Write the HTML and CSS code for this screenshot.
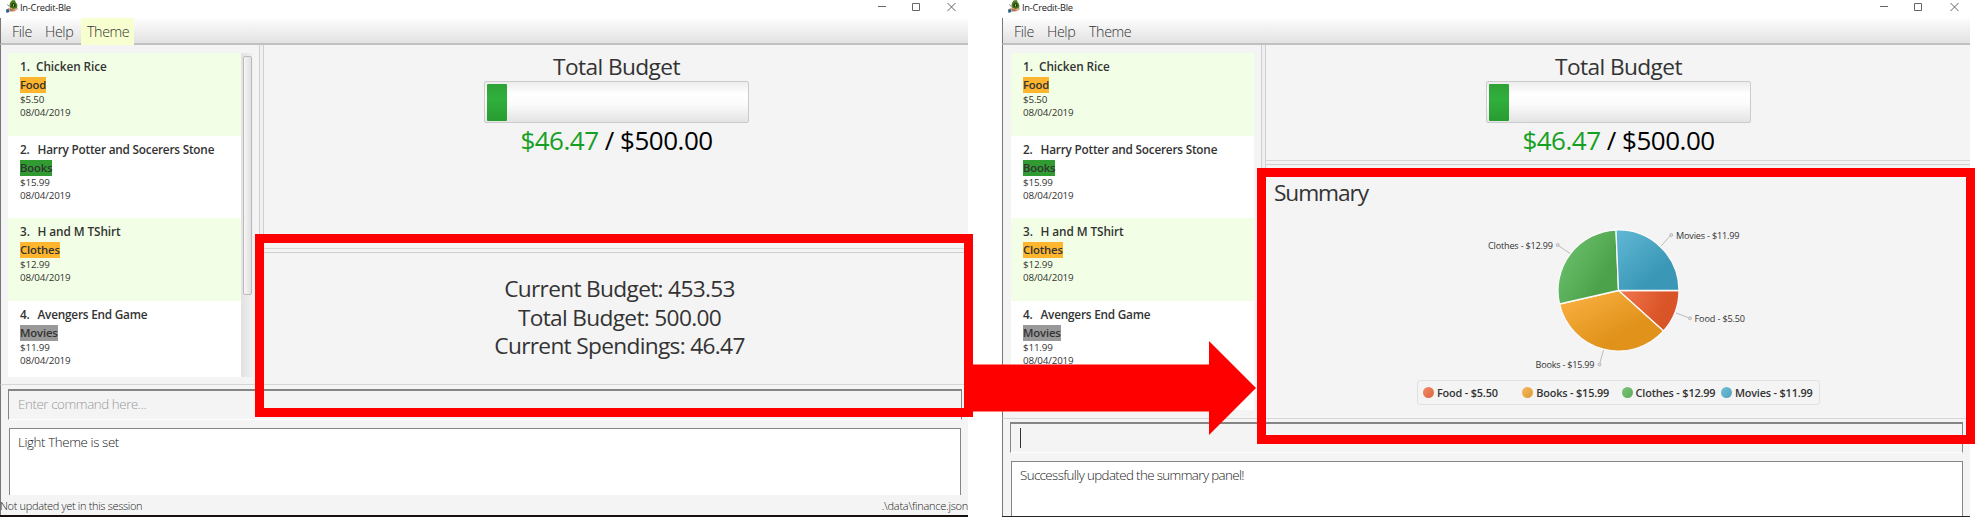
FILE: index.html
```
<!DOCTYPE html>
<html lang="en">
<head>
<meta charset="utf-8">
<title>In-Credit-Ble</title>
<link rel="stylesheet" href="styles.css">
</head>
<body>
<svg class="defs" width="0" height="0" aria-hidden="true">
  <symbol id="app-icon" viewBox="0 0 12 13">
    <path d="M4.500 2 6 .3h3l.5 1.700C11 3.500 11.600 5 11.300 7c-.3 1.600-1.600 2-3.500 2S3.800 8.500 3.600 6.500 3.800 3.200 4.500 2Z" fill="#4c7d1d"/>
    <circle cx="7.500" cy="5.300" r="2.200" fill="#23420f"/>
    <path d="M7 4.200h1v2.300H7Z" fill="#9cc65a"/>
    <path d="M1.500 8.500 4 7.500 7.500 9 11.500 7.800 12 9l-3.500 2.600-5 .2L2 11Z" fill="#d9a27c"/>
    <path d="M4 9.800 7.500 10.200" stroke="#5b3b2a" stroke-width=".8"/>
    <path d="M0 9.500 2.500 9 3.300 12 .5 13Z" fill="#1d5f95"/>
    <path d="M1.500 4.500 3 6.500" stroke="#555" stroke-width=".8"/>
  </symbol>
</svg>

<main class="scene">
  <section class="window window-left">
    <header class="titlebar">
      <svg class="app-icon"><use href="#app-icon"/></svg>
      <span class="app-name">In-Credit-Ble</span>
      <svg class="controls" viewBox="0 0 80 10"><path d="M0 4.500h8M34.500 1.500h7v7h-7ZM69.500 1l8 8M77.500 1l-8 8"/></svg>
    </header>
    <nav class="menubar"><span class="menu m-file">File</span><span class="menu m-help">Help</span><span class="menu m-theme active">Theme</span></nav>
    <div class="content">
      <div class="list-pane">
        <ul class="list">
          <li class="row"><b class="name n1"><i>1.</i>Chicken Rice</b><span class="tag orange">Food</span><span class="meta">$5.50</span><span class="meta">08/04/2019</span></li>
          <li class="row"><b class="name n2"><i>2.</i>Harry Potter and Socerers Stone</b><span class="tag green">Books</span><span class="meta">$15.99</span><span class="meta">08/04/2019</span></li>
          <li class="row"><b class="name n3"><i>3.</i>H and M TShirt</b><span class="tag orange">Clothes</span><span class="meta">$12.99</span><span class="meta">08/04/2019</span></li>
          <li class="row"><b class="name n4"><i>4.</i>Avengers End Game</b><span class="tag gray">Movies</span><span class="meta">$11.99</span><span class="meta">08/04/2019</span></li>
        </ul>
        <div class="scrollbar"><div class="thumb"></div></div>
      </div>
      <div class="v-split"></div>
      <div class="panels">
        <div class="budget">
          <div class="budget-title">Total Budget</div>
          <div class="progress"><div class="bar"></div></div>
          <div class="amount"><span class="spent">$46.47</span> / $500.00</div>
        </div>
        <div class="h-split"></div>
        <div class="totals">
          <div class="total">Current Budget: 453.53</div>
          <div class="total">Total Budget: 500.00</div>
          <div class="total">Current Spendings: 46.47</div>
        </div>
      </div>
    </div>
    <div class="command"><span class="placeholder">Enter command here...</span></div>
    <div class="result"><span class="message">Light Theme is set</span></div>
    <footer class="status"><span>Not updated yet in this session</span><span class="path">.\data\finance.json</span></footer>
  </section>

  <section class="window window-right">
    <header class="titlebar">
      <svg class="app-icon"><use href="#app-icon"/></svg>
      <span class="app-name">In-Credit-Ble</span>
      <svg class="controls" viewBox="0 0 80 10"><path d="M0 4.500h8M34.500 1.500h7v7h-7ZM70.500 1l8 8M78.500 1l-8 8"/></svg>
    </header>
    <nav class="menubar"><span class="menu m-file">File</span><span class="menu m-help">Help</span><span class="menu m-theme">Theme</span></nav>
    <div class="content">
      <div class="list-pane">
        <ul class="list">
          <li class="row"><b class="name n1"><i>1.</i>Chicken Rice</b><span class="tag orange">Food</span><span class="meta">$5.50</span><span class="meta">08/04/2019</span></li>
          <li class="row"><b class="name n2"><i>2.</i>Harry Potter and Socerers Stone</b><span class="tag green">Books</span><span class="meta">$15.99</span><span class="meta">08/04/2019</span></li>
          <li class="row"><b class="name n3"><i>3.</i>H and M TShirt</b><span class="tag orange">Clothes</span><span class="meta">$12.99</span><span class="meta">08/04/2019</span></li>
          <li class="row"><b class="name n4"><i>4.</i>Avengers End Game</b><span class="tag gray">Movies</span><span class="meta">$11.99</span><span class="meta">08/04/2019</span></li>
        </ul>
      </div>
      <div class="v-split"></div>
      <div class="panels">
        <div class="budget">
          <div class="budget-title">Total Budget</div>
          <div class="progress"><div class="bar"></div></div>
          <div class="amount"><span class="spent">$46.47</span> / $500.00</div>
        </div>
        <div class="h-split"></div>
        <div class="summary">
          <div class="summary-title">Summary</div>
          <svg class="chart" viewBox="1467 216 300 160">
            <defs>
              <radialGradient id="g-red" gradientUnits="userSpaceOnUse" cx="1618.500" cy="291.500" r="62"><stop offset="0" stop-color="#f3754f"/><stop offset=".8" stop-color="#d95426"/></radialGradient>
              <linearGradient id="g-orange" gradientUnits="userSpaceOnUse" x1="1575" y1="295" x2="1605" y2="352"><stop offset="0" stop-color="#f8ae3f"/><stop offset=".9" stop-color="#e0921a"/></linearGradient>
              <linearGradient id="g-green" gradientUnits="userSpaceOnUse" x1="1570" y1="250" x2="1612" y2="275"><stop offset="0" stop-color="#67bb67"/><stop offset=".9" stop-color="#4ca24a"/></linearGradient>
              <linearGradient id="g-blue" gradientUnits="userSpaceOnUse" x1="1620" y1="235" x2="1660" y2="280"><stop offset="0" stop-color="#5db5d3"/><stop offset=".9" stop-color="#3a98b6"/></linearGradient>
            </defs>
            <g stroke="#fafafa" stroke-width="1.300" stroke-linejoin="round">
              <path d="M1618.500 291.500H1679A60.500 60.500 0 0 1 1663.500 332Z" fill="url(#g-red)"/>
              <path d="M1618.500 291.500 1663.500 332A60.500 60.500 0 0 1 1559.500 305Z" fill="url(#g-orange)"/>
              <path d="M1618.500 291.500 1559.500 305A60.500 60.500 0 0 1 1616 231Z" fill="url(#g-green)"/>
              <path d="M1618.500 291.500 1616 231A60.500 60.500 0 0 1 1679 291.500Z" fill="url(#g-blue)"/>
            </g>
            <g class="leaders"><path d="M1661 247 1671 236M1676 314 1690 319.300M1603.500 351 1599.500 365.500M1570 254.500 1557.700 246"/><circle cx="1671.200" cy="236" r="1.500"/><circle cx="1690" cy="319.300" r="1.500"/><circle cx="1599.500" cy="365.500" r="1.500"/><circle cx="1557.700" cy="246" r="1.500"/></g>
            <g class="labels">
              <text x="1488" y="249.500" textLength="65">Clothes - $12.99</text>
              <text x="1676" y="239.800" textLength="63.500">Movies - $11.99</text>
              <text x="1694.500" y="322.500" textLength="50.500">Food - $5.50</text>
              <text x="1535.500" y="369" textLength="59">Books - $15.99</text>
            </g>
          </svg>
          <div class="legend">
            <span class="key red">Food - $5.50</span><span class="key amber">Books - $15.99</span><span class="key leaf">Clothes - $12.99</span><span class="key sky">Movies - $11.99</span>
          </div>
        </div>
      </div>
    </div>
    <div class="command"><span class="caret"></span></div>
    <div class="result"><span class="message long">Successfully updated the summary panel!</span></div>
  </section>

  <div class="callout callout-left"></div>
  <div class="callout callout-right"></div>
  <svg class="arrow" viewBox="0 0 284 94"><path d="M0 23.500H237V0L284 47 237 94V70.500H0Z" fill="#f00"/></svg>
</main>
</body>
</html>
```
FILE: styles.css
```
* { box-sizing: border-box; }
body { margin: 0; background: #fff; font-family: "Open Sans", "Noto Sans", sans-serif; color: #333; }
.defs { position: absolute; }
.scene { position: relative; display: flex; width: 1975px; height: 517px; overflow: hidden; }
.window { display: flex; flex-direction: column; height: 517px; background: linear-gradient(90deg, #777 1px, #f4f4f4 1px); white-space: nowrap; }
.window-left { width: 968px; border-bottom: 2px solid #16100f; }
.window-right { width: 968px; margin-left: 34px; border-bottom: 1px solid #2a2323; }

.titlebar { display: flex; align-items: flex-start; height: 18px; padding-left: 6px; background: #fff; flex: none; }
.app-icon { width: 12px; height: 13px; }
.app-name { margin-left: 2px; font-size: 9.300px; line-height: 15px; letter-spacing: -.25px; color: #222; }
.controls { width: 80px; height: 10px; margin: 2px 10px 0 auto; fill: none; stroke: #666; stroke-width: 1; }
.menubar { display: flex; height: 27px; padding-left: 6px; border-bottom: 2px solid #c0c0c0; background: linear-gradient(#fdfdfd, #e2e2e2); flex: none; border-left: 1px solid #777; }
.menu { height: 27px; line-height: 27px; font-size: 14.300px; font-weight: 300; letter-spacing: -.4px; color: #333; padding-left: 5px; }
.m-file { width: 33px; }
.m-help { width: 41px; }
.m-theme { width: 53px; padding-left: 6px; }
.active { background: #f7ffd0; }

.content { display: flex; flex: none; border-left: 1px solid #777; border-bottom: 1px solid #d6d6d6; }
.window-left .content { height: 340px; }
.window-right .content { height: 374px; }
.list-pane { display: flex; padding: 8px 6px 7px 7px; width: 258px; }
.window-right .list-pane { padding: 8px 7px 8px 8px; }
.list { flex: 1; margin: 0; padding: 0; list-style: none; background: #fff; overflow: hidden; }
.row { display: flex; flex-direction: column; align-items: flex-start; height: 82.700px; padding: 5px 0 0 12px; }
.row:nth-child(odd) { background: #f2ffe6; }
.name { height: 19px; line-height: 17px; font-size: 11.800px; font-weight: 600; letter-spacing: -.22px; color: #333; }
.name i { display: inline-block; width: 17.500px; font-style: normal; }
.n1 i { width: 16px; }
.n1, .n3 { letter-spacing: -.08px; }
.tag { height: 16px; line-height: 16px; font-size: 11.300px; font-weight: 600; letter-spacing: -.15px; }
.orange { background: #ffb52e; }
.green { background: #2f9b31; }
.gray { background: #999; }
.meta { height: 13px; line-height: 13px; font-size: 9.800px; letter-spacing: -.15px; }
.scrollbar { width: 12px; padding: 3px 1px 0 2px; background: linear-gradient(90deg, #e2e2e2, #f0f0f0); }
.thumb { width: 9px; height: 239px; border: 1px solid #bbb; border-radius: 2px; background: linear-gradient(90deg, #f6f6f6, #e0e0e0); }

.v-split { width: 5px; border-left: 1px solid #d0d0d0; border-right: 1px solid #d0d0d0; background: #f0f0f0; }
.panels { flex: 1; display: flex; flex-direction: column; }
.h-split { height: 5px; flex: none; border-top: 1px solid #d6d6d6; border-bottom: 1px solid #cfcfcf; }
.budget { display: flex; flex-direction: column; align-items: center; padding-top: 7px; }
.window-left .budget { height: 203px; }
.window-right .budget { height: 115px; }
.budget-title { height: 29px; line-height: 29px; padding-left: 1px; font-size: 22.700px; letter-spacing: -.6px; }
.progress { width: 265px; height: 42px; padding: 2px; border: 1px solid #cbcbcb; border-radius: 2px; background: linear-gradient(#ececec, #fff 30%, #fbfbfb 55%, #e4e4e4); }
.bar { width: 20px; height: 37px; border-radius: 1px; background: linear-gradient(#2ea237, #30b03c 40%, #289c31); }
.amount { height: 36px; line-height: 35px; padding-left: 1px; font-size: 26px; letter-spacing: -.5px; color: #000; }
.spent { color: #16a022; }
.totals { display: flex; flex-direction: column; align-items: center; padding: 22px 0 0 7px; }
.total { height: 28.500px; line-height: 28.500px; font-size: 22.700px; letter-spacing: -.68px; }

.summary { display: flex; flex-direction: column; align-items: flex-start; padding: 12px 0 0 8px; }
.summary-title { height: 30px; line-height: 32px; font-size: 22.700px; letter-spacing: -1.100px; }
.chart { width: 300px; height: 160px; margin: 8px 0 0 193px; }
.leaders { fill: #ddd; stroke: #bbb; stroke-width: 1; }
.labels { font-size: 9.100px; fill: #333; }
.legend { display: flex; align-items: center; width: 403px; height: 25px; margin: 5px 0 0 143px; padding-left: 5px; border: 1px solid #e0e0e0; border-radius: 3px; font-size: 10.900px; font-weight: 600; letter-spacing: -.18px; }
.key { display: flex; align-items: center; width: 99.300px; flex: none; }
.key::before { content: ""; width: 11px; height: 11px; margin-right: 3px; border-radius: 50%; flex: none; }
.red::before { background: linear-gradient(135deg, #f28a68, #da6540); }
.amber::before { background: linear-gradient(135deg, #f5b95c, #dd9a35); }
.leaf::before { background: linear-gradient(135deg, #7cc47b, #5cab5b); }
.sky::before { background: linear-gradient(135deg, #73bfd7, #4fa3bd); }

.command { height: 31px; margin: 4px 6px 0 8px; border: 1px solid #858585; border-top-width: 2px; border-bottom-color: #fff; padding-left: 9px; flex: none; }
.placeholder { display: block; line-height: 27px; font-size: 13.300px; font-weight: 300; letter-spacing: -.4px; color: #999; }
.caret { display: block; width: 1px; height: 20px; margin-top: 4px; background: #333; }
.result { margin: 8px 7px 0 9px; height: 67px; padding-left: 8px; border: 1px solid #858585; border-bottom: 0; background: #fff; flex: none; }
.message { display: block; font-size: 13.300px; line-height: 26px; font-weight: 300; letter-spacing: -.38px; color: #222; }
.long { line-height: 27px; letter-spacing: -.6px; }
.window-right .result { height: auto; flex: 1; }
.window-right .command { margin: 3px 7px 0 8px; }
.status { display: flex; justify-content: space-between; flex: 1; font-size: 11px; line-height: 22px; font-weight: 300; letter-spacing: -.33px; color: #222; }
.path { letter-spacing: -.25px; }

.callout { position: absolute; border: 9px solid #f00; width: 718px; }
.callout-left { left: 255px; top: 234px; height: 183px; }
.callout-right { left: 1257px; top: 168px; height: 276px; }
.arrow { position: absolute; left: 972px; top: 341px; width: 284px; height: 94px; }
```
